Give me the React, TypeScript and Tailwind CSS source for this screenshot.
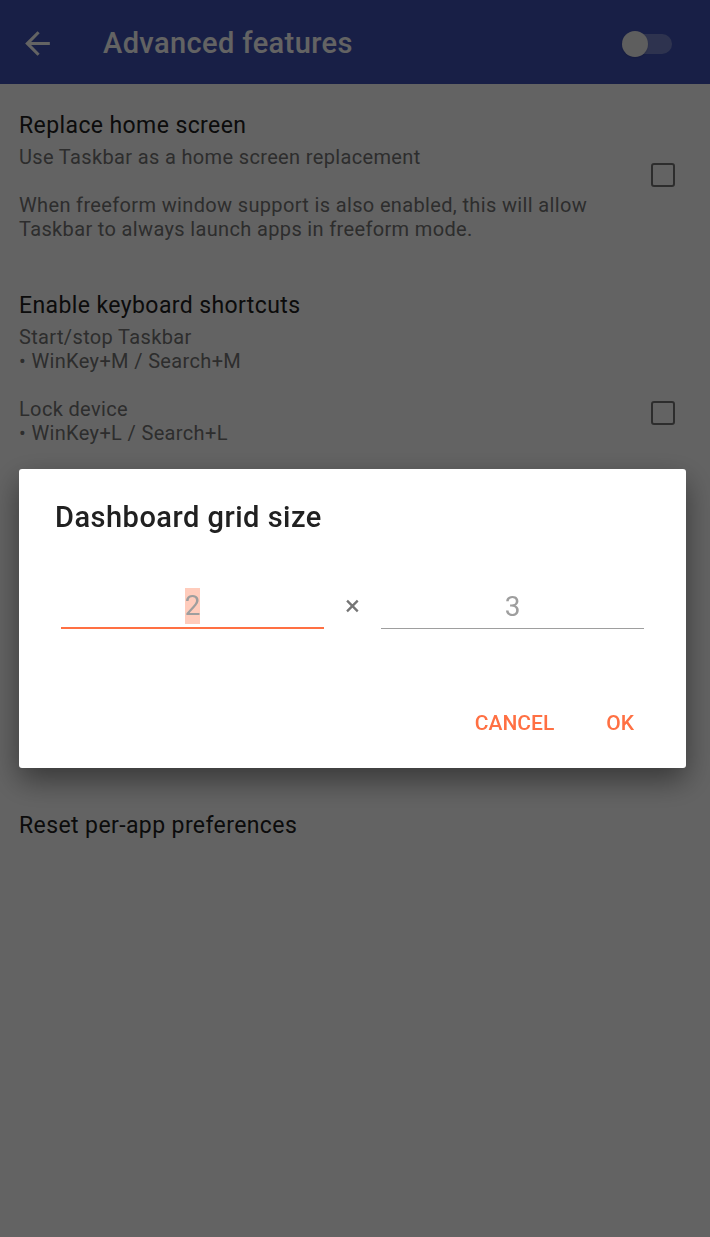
function Checkbox() {
  return <div className="h-[24px] w-[24px] rounded-[3px] border-2 border-[#757575]" />
}

function BackArrow() {
  return (
    <svg viewBox="0 0 24 24" className="h-[37px] w-[37px]" fill="currentColor">
      <path d="M20 11H7.83l5.59-5.59L12 4l-8 8 8 8 1.41-1.41L7.83 13H20v-2z" />
    </svg>
  )
}

export default function App() {
  return (
    <div className="relative min-h-screen bg-white font-['Roboto',sans-serif]">
      {/* Toolbar */}
      <div className="flex h-[84px] items-center bg-[#3f51b5] pl-[19px] pr-[38px] pt-[3px] text-white">
        <BackArrow />
        <h1 className="ml-[47px] flex-1 text-[29px] font-medium tracking-[0.4px]">Advanced features</h1>
        <div className="relative h-[26px] w-[50px]">
          <div className="absolute left-[10px] right-0 top-[3px] h-[20px] rounded-full bg-[#9fa8da]/60" />
          <div className="absolute left-0 top-0 h-[26px] w-[26px] rounded-full bg-[#f1f1f1] shadow" />
        </div>
      </div>

      {/* Preferences */}
      <div className="px-[19px]">
        <div className="flex items-center pt-[28px]">
          <div className="flex-1">
            <p className="text-[23px] leading-[28px] tracking-[0.4px] text-[#212121]">Replace home screen</p>
            <p className="mt-[5px] whitespace-pre-line text-[20px] leading-[24px] tracking-[0.35px] text-[#757575]">
              {'Use Taskbar as a home screen replacement\n\nWhen freeform window support is also enabled, this will allow\nTaskbar to always launch apps in freeform mode.'}
            </p>
          </div>
          <div className="mb-[4px] pr-[16px]"><Checkbox /></div>
        </div>

        <div className="mt-[51px] flex items-start">
          <div className="flex-1">
            <p className="text-[23px] leading-[28px] tracking-[0.4px] text-[#212121]">Enable keyboard shortcuts</p>
            <p className="mt-[5px] whitespace-pre-line text-[20px] leading-[24px] tracking-[0.35px] text-[#757575]">
              {'Start/stop Taskbar\n• WinKey+M / Search+M\n\nLock device\n• WinKey+L / Search+L'}
            </p>
          </div>
          <div className="mt-[109px] pr-[16px]"><Checkbox /></div>
        </div>

        <p className="mt-[367px] text-[23px] leading-[28px] tracking-[0.4px] text-[#212121]">Reset per-app preferences</p>
      </div>

      {/* Scrim + dialog */}
      <div className="fixed inset-0 flex items-center bg-black/[0.61] pl-[19px]">
        <div className="h-[299px] w-[667px] rounded-[3px] bg-white shadow-[0_12px_30px_rgba(0,0,0,0.45)]">
          <h2 className="pl-[36px] pt-[32px] text-[29px] font-medium leading-[32px] tracking-[0.5px] text-[#212121]">Dashboard grid size</h2>
          <div className="mt-[50px] flex items-end px-[42px]">
            <div className="flex h-[46px] flex-1 items-center justify-center border-b-2 border-[#ff7043] pt-[2px]">
              <span className="bg-[#ffccbc] text-[28px] leading-[36px] text-[#9e9e9e]">2</span>
            </div>
            <span className="mx-[21px] mb-[9px] text-[28px] leading-[28px] text-[#757575]">×</span>
            <div className="flex h-[46px] flex-1 items-center justify-center border-b-[1.5px] border-[#9e9e9e] pt-[2px]">
              <span className="text-[28px] leading-[36px] text-[#9e9e9e]">3</span>
            </div>
          </div>
          <div className="mt-[79px] flex justify-end gap-[52px] pr-[52px]">
            <button className="text-[21px] font-medium text-[#ff7043]">CANCEL</button>
            <button className="text-[21px] font-medium text-[#ff7043]">OK</button>
          </div>
        </div>
      </div>
    </div>
  )
}
